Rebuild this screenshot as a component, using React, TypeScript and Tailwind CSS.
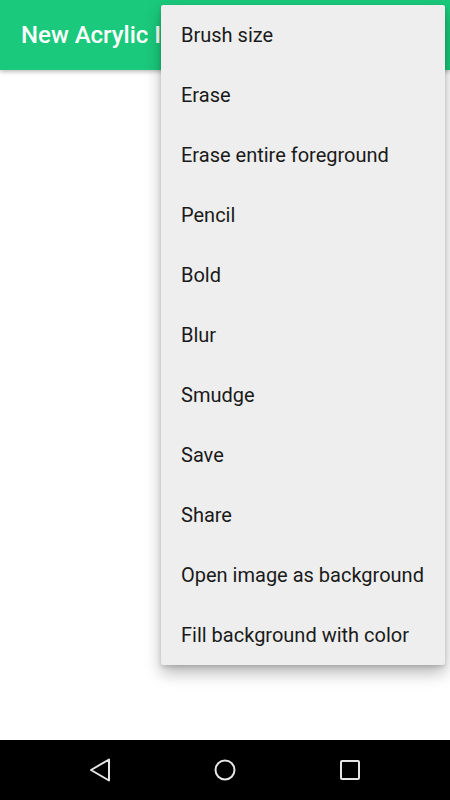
import React from "react";

const items = [
  "Brush size",
  "Erase",
  "Erase entire foreground",
  "Pencil",
  "Bold",
  "Blur",
  "Smudge",
  "Save",
  "Share",
  "Open image as background",
  "Fill background with color",
];

export default function App() {
  return (
    <div className="relative w-[450px] h-[800px] bg-white flex flex-col overflow-hidden" style={{ fontFamily: "Roboto, 'Noto Sans', sans-serif" }}>
      <div className="h-[70px] shrink-0 bg-[#1ac97b] flex items-center pl-[21px] shadow-[0_2px_4px_rgba(0,0,0,0.25)] z-10">
        <span className="text-white text-[24px] font-medium">New Acrylic Image</span>
      </div>
      <div className="flex-1" />
      <div className="h-[60px] shrink-0 bg-black flex items-center justify-center gap-[101px]">
        <svg width="24" height="24" viewBox="0 0 24 24">
          <path d="M21 1.5 L21 22.5 L3 12 Z" fill="none" stroke="#e6e6e6" strokeWidth="2" strokeLinejoin="round" />
        </svg>
        <svg width="24" height="24" viewBox="0 0 24 24">
          <circle cx="12" cy="12" r="9.5" fill="none" stroke="#e6e6e6" strokeWidth="2" />
        </svg>
        <svg width="24" height="24" viewBox="0 0 24 24">
          <rect x="3" y="3" width="18" height="18" rx="1" fill="none" stroke="#e6e6e6" strokeWidth="2" />
        </svg>
      </div>
      <div className="absolute left-[161px] top-[5px] w-[284px] bg-[#eeeeee] rounded-[2px] shadow-[0_8px_16px_rgba(0,0,0,0.28),0_2px_4px_rgba(0,0,0,0.15)] z-20 flex flex-col">
        {items.map((t) => (
          <div key={t} className="h-[60px] flex items-center pl-[20px] text-[20px] text-[#1a1a1a]">
            {t}
          </div>
        ))}
      </div>
    </div>
  );
}
